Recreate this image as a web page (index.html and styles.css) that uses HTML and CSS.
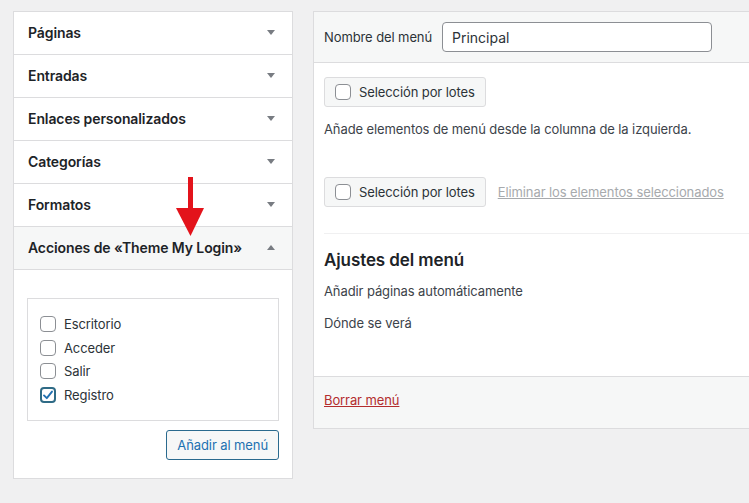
FILE: index.html
```html
<!DOCTYPE html>
<html lang="es">

<head>
    <title>Menús</title>
    <meta charset="UTF-8">
    <meta name="viewport" content="width=device-width, initial-scale=1">
    <link rel="stylesheet" href="styles.css">
</head>

<body>
    <div class="page">
        <div class="sidebar">
            <div class="section">Páginas<span class="toggle"></span></div>
            <div class="section">Entradas<span class="toggle"></span></div>
            <div class="section">Enlaces personalizados<span class="toggle"></span></div>
            <div class="section">Categorías<span class="toggle"></span></div>
            <div class="section">Formatos<span class="toggle"></span></div>
            <div class="section open">Acciones de «Theme My Login»<span class="toggle up"></span></div>
            <div class="inside">
                <div class="checklist">
                    <label class="item"><span class="box"></span>Escritorio</label>
                    <label class="item"><span class="box"></span>Acceder</label>
                    <label class="item"><span class="box"></span>Salir</label>
                    <label class="item"><span class="box checked">
                        <svg width="12" height="12" viewBox="0 0 12 12"><path d="M2 6.4 L4.8 9.2 L10 2.6" fill="none" stroke="#2271b1" stroke-width="1.9" stroke-linecap="round" stroke-linejoin="round"/></svg>
                    </span>Registro</label>
                </div>
                <div class="actions">
                    <button class="addbtn" type="button">Añadir al menú</button>
                </div>
            </div>
        </div>

        <div class="editor">
            <div class="editor-head">
                <span class="label">Nombre del menú</span>
                <input class="menuname" type="text" value="Principal">
            </div>
            <div class="editor-body">
                <div class="bulk">
                    <span class="bulkbtn"><span class="box"></span>Selección por lotes</span>
                </div>
                <p class="hint">Añade elementos de menú desde la columna de la izquierda.</p>
                <div class="bulk second">
                    <span class="bulkbtn"><span class="box"></span>Selección por lotes</span>
                    <a class="removelink" href="#">Eliminar los elementos seleccionados</a>
                </div>
                <div class="settings">
                    <h3>Ajustes del menú</h3>
                    <p>Añadir páginas automáticamente</p>
                    <p class="where">Dónde se verá</p>
                </div>
            </div>
            <div class="editor-foot">
                <a class="delete" href="#">Borrar menú</a>
            </div>
        </div>

        <svg class="arrow" width="40" height="70" viewBox="0 0 40 70">
            <rect x="12" y="0" width="5" height="34" fill="#e3131b"/>
            <polygon points="0,31 28,31 14.5,59" fill="#e3131b"/>
        </svg>
    </div>
</body>

</html>
```

FILE: styles.css
```css
body {
    margin: 0;
    background: #f0f0f1;
    font-family: Inter, "Noto Sans", sans-serif;
    font-size: 13px;
    letter-spacing: -0.1px;
    color: #3c434a;
    overflow: hidden;
}

.page {
    position: relative;
    display: flex;
    align-items: flex-start;
    gap: 20px;
    padding: 11px 0 0 13px;
    width: 1000px;
}

/* columna izquierda */

.sidebar {
    width: 278px;
    border: 1px solid #dcdcde;
    background: #fff;
}

.section {
    display: flex;
    align-items: center;
    justify-content: space-between;
    height: 42px;
    padding: 0 17px 1px 14px;
    box-sizing: border-box;
    height: 43px;
    border-bottom: 1px solid #dcdcde;
    font-size: 14px;
    font-weight: 600;
    color: #1d2327;
}

.section.open {
    background: #f6f7f7;
}

.toggle {
    width: 0;
    height: 0;
    border-left: 4px solid transparent;
    border-right: 4px solid transparent;
    border-top: 5px solid #787c82;
}

.toggle.up {
    border-top: 0;
    border-bottom: 5px solid #787c82;
}

.inside {
    padding: 28px 13px 18px 13px;
}

.checklist {
    border: 1px solid #dcdcde;
    padding: 13px 12px 13px 12px;
}

.item {
    display: flex;
    align-items: center;
    gap: 8px;
    height: 23.7px;
    color: #2c3338;
}

.box {
    display: inline-flex;
    align-items: center;
    justify-content: center;
    box-sizing: border-box;
    width: 16px;
    height: 16px;
    border: 1px solid #8c8f94;
    border-radius: 4px;
    background: #fff;
    flex-shrink: 0;
}

.box.checked {
    border: 2px solid #2f6b86;
}

.actions {
    display: flex;
    justify-content: flex-end;
    margin-top: 9px;
}

.addbtn {
    height: 30px;
    padding: 0 10px;
    border: 1px solid #2a6a8e;
    border-radius: 3px;
    background: #f6f7f7;
    color: #2271b1;
    font-family: inherit;
    font-size: 13px;
    letter-spacing: -0.1px;
}

/* columna derecha */

.editor {
    width: 460px;
    border: 1px solid #dcdcde;
    background: #fff;
}

.editor-head {
    display: flex;
    align-items: center;
    gap: 10px;
    padding: 10px 10px;
    background: #f6f7f7;
    border-bottom: 1px solid #dcdcde;
}

.label {
    color: #2c3338;
}

.menuname {
    box-sizing: border-box;
    width: 270px;
    height: 30px;
    padding: 0 9px;
    border: 1px solid #8c8f94;
    border-radius: 4px;
    font-family: inherit;
    font-size: 14px;
    color: #2c3338;
}

.editor-body {
    padding: 14px 0 0 10px;
}

.bulk {
    display: flex;
    align-items: center;
    gap: 12px;
}

.bulkbtn {
    display: inline-flex;
    align-items: center;
    gap: 8px;
    box-sizing: border-box;
    height: 30px;
    padding: 0 10px;
    border: 1px solid #dcdcde;
    border-radius: 3px;
    background: #f6f7f7;
    color: #2c3338;
    white-space: nowrap;
}

.hint {
    margin: 13px 0 0 0;
    line-height: 19px;
}

.bulk.second {
    margin-top: 38px;
}

.removelink {
    color: #a7aaad;
    text-decoration: underline;
    white-space: nowrap;
}

.settings {
    margin-top: 26px;
    border-top: 1px solid #f0f0f1;
    padding-bottom: 43px;
}

.settings h3 {
    margin: 15px 0 0 0;
    font-size: 17px;
    font-weight: 600;
    line-height: 22px;
    color: #1d2327;
}

.settings p {
    margin: 11px 0 0 0;
    line-height: 19px;
}

.settings p.where {
    margin-top: 13px;
}

.editor-foot {
    padding: 11px 10px 16px 10px;
    height: 24px;
    border-top: 1px solid #dcdcde;
    background: #f6f7f7;
    line-height: 24px;
}

.delete {
    color: #b32d2e;
    text-decoration: underline;
}

.arrow {
    position: absolute;
    left: 176px;
    top: 177px;
}
```
